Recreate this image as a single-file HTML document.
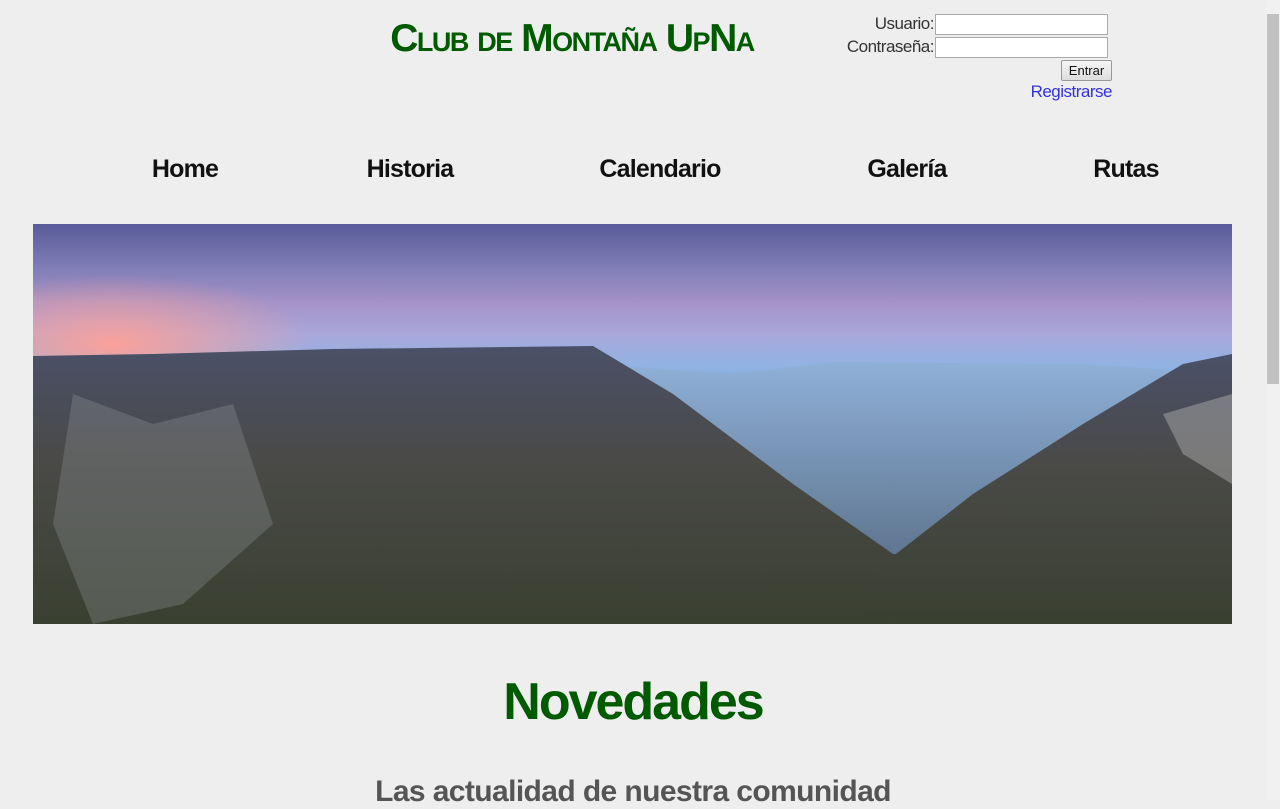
<!DOCTYPE html>
<html><head><meta charset="utf-8"><style>
html,body{margin:0;padding:0;}
body{width:1280px;height:800px;overflow:hidden;background:#eeeeee;font-family:"Liberation Sans",sans-serif;position:relative;}
.abs{position:absolute;}
.title{left:330px;width:484px;top:17px;text-align:center;font-size:39px;font-weight:bold;font-variant:small-caps;color:#005a00;letter-spacing:-1.5px;white-space:nowrap;}
.lbl{font-size:17px;color:#333;text-align:right;width:200px;letter-spacing:-0.5px;}
.inp{width:171px;height:19px;background:#fff;border:1px solid #aaa;}
.btn{left:1061px;top:60px;width:49px;height:19px;border:1px solid #999;border-radius:2px;background:linear-gradient(#f6f6f6,#dddddd);font-size:13px;text-align:center;line-height:19px;color:#111;}
.reg{left:1000px;width:112px;top:82px;text-align:right;font-size:17px;color:#3333dd;letter-spacing:-0.5px;}
.nav{top:155px;font-size:25px;font-weight:bold;color:#111;transform:translateX(-50%);white-space:nowrap;letter-spacing:-0.8px;}
.img{left:33px;top:224px;width:1199px;height:400px;overflow:hidden;
background:
radial-gradient(ellipse 200px 70px at 80px 120px,rgba(255,160,150,0.95),rgba(255,150,150,0) 100%),
linear-gradient(180deg,#585c98 0%,#7c7ab4 10%,#a594c8 20%,#a8a8dc 28%,#8fb3e3 36%,#7da4d6 42%,#7892b8 48%,#5c6a7a 55%,#4d5a55 65%,#4a4f3c 80%,#3e4533 100%);}
.sb{left:1266px;top:0;width:14px;height:800px;background:#f1f1f1;}
.thumb{left:1267px;top:14px;width:12px;height:370px;background:#c1c1c1;}
.h1{left:0;width:1266px;top:672px;text-align:center;font-size:52px;font-weight:bold;color:#005a00;letter-spacing:-2px;}
.h2{left:0;width:1266px;top:775px;text-align:center;font-size:30px;font-weight:bold;color:#555;letter-spacing:-0.6px;}
</style></head><body>
<div class="abs title">Club de Montaña UpNa</div>
<div class="abs lbl" style="left:734px;top:14px;">Usuario:</div>
<div class="abs inp" style="left:935px;top:14px;"></div>
<div class="abs lbl" style="left:734px;top:37px;">Contraseña:</div>
<div class="abs inp" style="left:935px;top:37px;"></div>
<div class="abs btn">Entrar</div>
<div class="abs reg">Registrarse</div>
<div class="abs nav" style="left:185px">Home</div>
<div class="abs nav" style="left:410px">Historia</div>
<div class="abs nav" style="left:660px">Calendario</div>
<div class="abs nav" style="left:907px">Galería</div>
<div class="abs nav" style="left:1126px">Rutas</div>
<div class="abs img">
<svg width="1199" height="400" style="position:absolute;left:0;top:0">
<defs><linearGradient id="m" x1="0" y1="0" x2="0" y2="1"><stop offset="0" stop-color="#4a5068"/><stop offset="0.4" stop-color="#4a4a48"/><stop offset="1" stop-color="#3a4030"/></linearGradient>
<linearGradient id="v" x1="0" y1="0" x2="0" y2="1"><stop offset="0" stop-color="#8fb0d8"/><stop offset="1" stop-color="#5f7690"/></linearGradient></defs>
<path d="M560 140 L700 150 L800 138 L1050 140 L1199 150 L1199 330 L800 330 L600 200Z" fill="url(#v)"/>
<path d="M0 132 L120 130 L300 125 L560 122 L640 170 L760 260 L860 330 L900 400 L0 400Z" fill="url(#m)"/>
<path d="M1199 130 L1150 140 L1050 200 L940 270 L850 340 L820 400 L1199 400Z" fill="url(#m)"/>
<path d="M40 170 L120 200 L200 180 L240 300 L150 380 L60 400 L20 300Z" fill="#8a8f92" opacity="0.35"/>
<path d="M1130 190 L1199 170 L1199 260 L1150 230Z" fill="#aaa" opacity="0.5"/>
</svg>
</div>
<div class="abs h1">Novedades</div>
<div class="abs h2">Las actualidad de nuestra comunidad</div>
<div class="abs sb"></div>
<div class="abs thumb"></div>
</body></html>
